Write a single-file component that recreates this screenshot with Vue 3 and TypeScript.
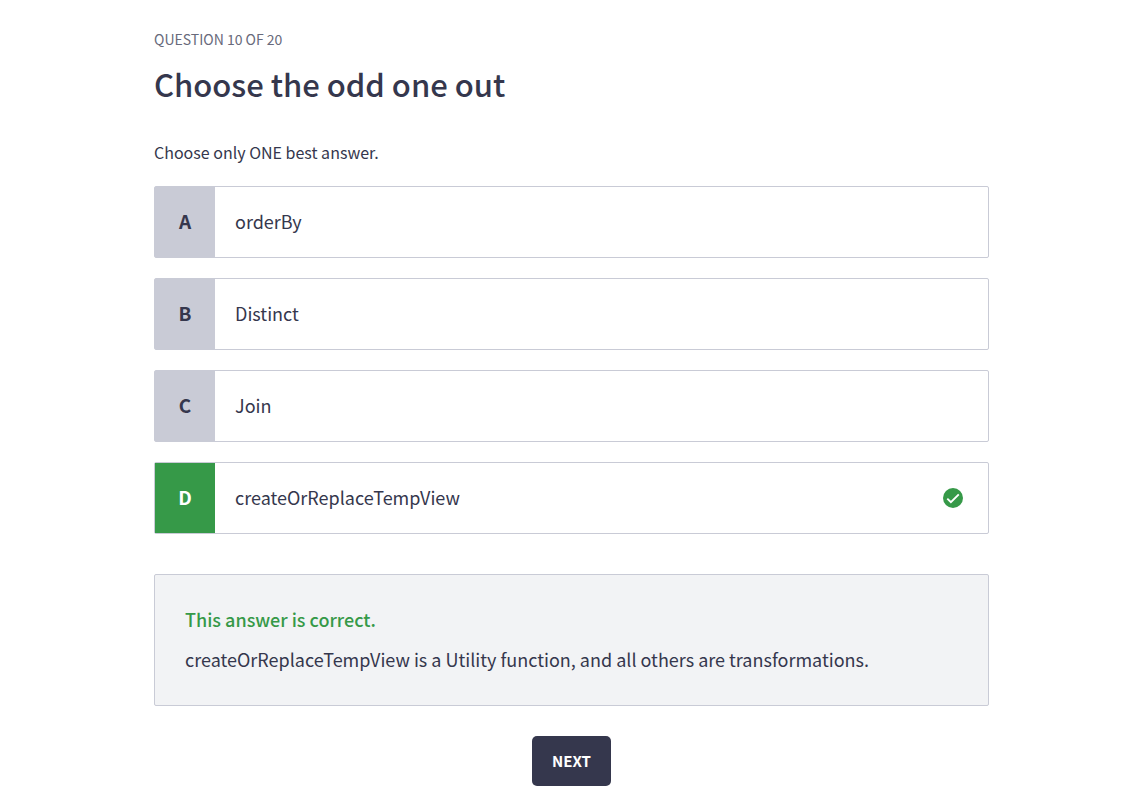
<script setup lang="ts">
import { ref } from 'vue'

interface Choice {
  letter: string
  text: string
  correct: boolean
}

const choices: Choice[] = [
  { letter: 'A', text: 'orderBy', correct: false },
  { letter: 'B', text: 'Distinct', correct: false },
  { letter: 'C', text: 'Join', correct: false },
  { letter: 'D', text: 'createOrReplaceTempView', correct: true },
]
const selected = ref('D')
</script>

<template>
  <main class="quiz">
    <p class="progress">QUESTION 10 OF 20</p>
    <h1 class="title">Choose the odd one out</h1>
    <p class="hint">Choose only ONE best answer.</p>
    <div class="choices">
      <button
        v-for="c in choices"
        :key="c.letter"
        type="button"
        class="choice"
        :class="{ correct: c.correct && selected === c.letter }"
        @click="selected = c.letter"
      >
        <span class="letter">{{ c.letter }}</span>
        <span class="text">{{ c.text }}</span>
        <svg v-if="c.correct && selected === c.letter" class="mark" viewBox="0 0 20 20" aria-hidden="true">
          <circle cx="10" cy="10" r="10" fill="#369948" />
          <path d="M4.3 10.6 7.9 14.2 15.8 6.4" fill="none" stroke="#fff" stroke-width="1.9" />
        </svg>
      </button>
    </div>
    <section class="feedback">
      <h2 class="verdict">This answer is correct.</h2>
      <p class="reason">createOrReplaceTempView is a Utility function, and all others are transformations.</p>
    </section>
    <button type="button" class="next">NEXT</button>
  </main>
</template>

<style scoped>
.quiz {
  display: flex;
  flex-direction: column;
  max-width: 835px;
  margin: 0 156px 0 154px;
  padding: 29px 0 9px;
  color: #35374d;
  font-family: "Source Sans Pro", "Noto Sans CJK SC", sans-serif;
}
.progress {
  margin: 0;
  font-size: 14px;
  line-height: 20px;
  color: #686a7b;
}
.title {
  margin: 15px 0 0;
  font-size: 31px;
  line-height: 40px;
  font-weight: 500;
}
.hint {
  margin: 36px 0 0;
  font-size: 16px;
  line-height: 24px;
}
.choices {
  display: flex;
  flex-direction: column;
  gap: 20px;
  margin-top: 22px;
}
.choice {
  display: flex;
  align-items: stretch;
  width: 100%;
  min-height: 72px;
  padding: 0;
  border: 1px solid #c9cbd6;
  border-radius: 2px;
  background: #fff;
  color: inherit;
  font-family: inherit;
  font-size: 18px;
  line-height: 30px;
  text-align: left;
  cursor: pointer;
}
.letter {
  display: flex;
  align-items: center;
  justify-content: center;
  width: 60px;
  padding-bottom: 2px;
  background: #c9cbd6;
  font-size: 19px;
  font-weight: 700;
}
.correct .letter {
  background: #369948;
  color: #fff;
}
.text {
  flex: 1;
  align-self: center;
  padding: 0 20px 2px;
}
.mark {
  align-self: center;
  width: 20px;
  height: 20px;
  margin-right: 25px;
}
.feedback {
  margin-top: 40px;
  padding: 29px 30px 31px;
  border: 1px solid #c9cbd6;
  border-radius: 2px;
  background: #f2f3f5;
}
.verdict {
  margin: 0;
  font-size: 18px;
  line-height: 30px;
  font-weight: 500;
  color: #369948;
}
.reason {
  margin: 10px 0 0;
  font-size: 18px;
  line-height: 30px;
}
.next {
  align-self: center;
  margin-top: 30px;
  padding: 0 20px;
  border: 0;
  border-radius: 5px;
  background: #35374d;
  color: #fff;
  font-family: inherit;
  font-size: 15px;
  line-height: 50px;
  font-weight: 700;
  cursor: pointer;
}
</style>
